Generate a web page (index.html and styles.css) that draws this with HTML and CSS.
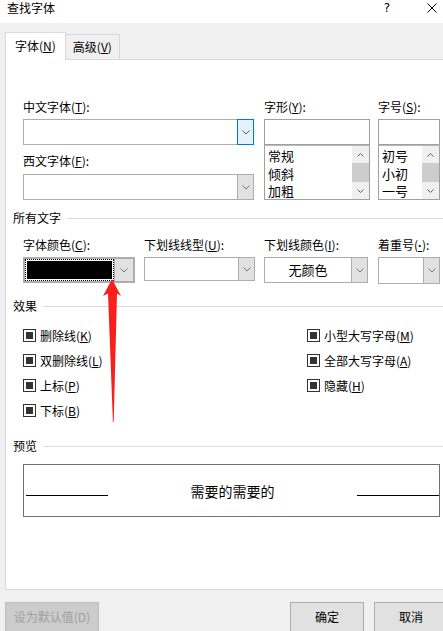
FILE: index.html
```html
<!DOCTYPE html>
<html lang="zh-CN">
<head>
    <meta charset="UTF-8">
    <title>查找字体</title>
    <link rel="stylesheet" href="styles.css">
</head>
<body>
    <div class="titlebar">
        <span class="title">查找字体</span>
        <span class="help">?</span>
        <svg class="close" width="10" height="10" viewBox="0 0 10 10">
            <path d="M0.5 0.5 L9.5 9.5 M9.5 0.5 L0.5 9.5" stroke="#000" stroke-width="1" fill="none"/>
        </svg>
    </div>

    <div class="tabs">
        <div class="tab active">字体(<u>N</u>)</div>
        <div class="tab">高级(<u>V</u>)</div>
    </div>

    <div class="panel">
        <!-- 字体 -->
        <div class="fonts">
            <div class="col col-face">
                <div class="field-label">中文字体(<u>T</u>):</div>
                <div class="combo">
                    <span class="value"></span>
                    <span class="drop focus"><svg width="8" height="5" viewBox="0 0 8 5"><polyline points="0.5,0.5 4,4 7.5,0.5" fill="none" stroke="#555"/></svg></span>
                </div>
                <div class="field-label second">西文字体(<u>F</u>):</div>
                <div class="combo">
                    <span class="value"></span>
                    <span class="drop"><svg width="8" height="5" viewBox="0 0 8 5"><polyline points="0.5,0.5 4,4 7.5,0.5" fill="none" stroke="#777"/></svg></span>
                </div>
            </div>
            <div class="col col-style">
                <div class="field-label">字形(<u>Y</u>):</div>
                <div class="textbox"></div>
                <div class="listbox">
                    <ul class="items">
                        <li>常规</li>
                        <li>倾斜</li>
                        <li>加粗</li>
                    </ul>
                    <div class="scrollbar">
                        <span class="sb-btn"><svg width="7" height="4" viewBox="0 0 7 4"><polyline points="0.5,3.5 3.5,0.5 6.5,3.5" fill="none" stroke="#606060"/></svg></span>
                        <span class="sb-thumb"></span>
                        <span class="sb-btn"><svg width="7" height="4" viewBox="0 0 7 4"><polyline points="0.5,0.5 3.5,3.5 6.5,0.5" fill="none" stroke="#606060"/></svg></span>
                    </div>
                </div>
            </div>
            <div class="col col-size">
                <div class="field-label">字号(<u>S</u>):</div>
                <div class="textbox"></div>
                <div class="listbox">
                    <ul class="items">
                        <li>初号</li>
                        <li>小初</li>
                        <li>一号</li>
                    </ul>
                    <div class="scrollbar">
                        <span class="sb-btn"><svg width="7" height="4" viewBox="0 0 7 4"><polyline points="0.5,3.5 3.5,0.5 6.5,3.5" fill="none" stroke="#606060"/></svg></span>
                        <span class="sb-thumb"></span>
                        <span class="sb-btn"><svg width="7" height="4" viewBox="0 0 7 4"><polyline points="0.5,0.5 3.5,3.5 6.5,0.5" fill="none" stroke="#606060"/></svg></span>
                    </div>
                </div>
            </div>
        </div>

        <!-- 所有文字 -->
        <div class="group">所有文字</div>
        <div class="attrs">
            <div class="attr attr-color">
                <div class="field-label">字体颜色(<u>C</u>):</div>
                <div class="combo color">
                    <span class="swatch"><span class="swatch-fill"></span></span>
                    <span class="drop plain"><svg width="8" height="5" viewBox="0 0 8 5"><polyline points="0.5,0.5 4,4 7.5,0.5" fill="none" stroke="#777"/></svg></span>
                </div>
            </div>
            <div class="attr attr-ustyle">
                <div class="field-label">下划线线型(<u>U</u>):</div>
                <div class="combo short">
                    <span class="value"></span>
                    <span class="drop"><svg width="8" height="5" viewBox="0 0 8 5"><polyline points="0.5,0.5 4,4 7.5,0.5" fill="none" stroke="#777"/></svg></span>
                </div>
            </div>
            <div class="attr attr-ucolor">
                <div class="field-label">下划线颜色(<u>I</u>):</div>
                <div class="combo">
                    <span class="value center">无颜色</span>
                    <span class="drop"><svg width="8" height="5" viewBox="0 0 8 5"><polyline points="0.5,0.5 4,4 7.5,0.5" fill="none" stroke="#777"/></svg></span>
                </div>
            </div>
            <div class="attr attr-emph">
                <div class="field-label">着重号(<u class="latin">·</u>):</div>
                <div class="combo tall">
                    <span class="value"></span>
                    <span class="drop"><svg width="8" height="5" viewBox="0 0 8 5"><polyline points="0.5,0.5 4,4 7.5,0.5" fill="none" stroke="#777"/></svg></span>
                </div>
            </div>
        </div>

        <!-- 效果 -->
        <div class="group">效果</div>
        <div class="effects">
            <div class="effects-col left">
                <label class="check"><span class="box"></span><span>删除线(<u>K</u>)</span></label>
                <label class="check"><span class="box"></span><span>双删除线(<u>L</u>)</span></label>
                <label class="check"><span class="box"></span><span>上标(<u>P</u>)</span></label>
                <label class="check"><span class="box"></span><span>下标(<u>B</u>)</span></label>
            </div>
            <div class="effects-col">
                <label class="check"><span class="box"></span><span>小型大写字母(<u>M</u>)</span></label>
                <label class="check"><span class="box"></span><span>全部大写字母(<u>A</u>)</span></label>
                <label class="check"><span class="box"></span><span>隐藏(<u>H</u>)</span></label>
            </div>
        </div>

        <!-- 预览 -->
        <div class="group">预览</div>
        <div class="preview">
            <span class="rule"></span>
            <span class="sample">需要的需要的</span>
            <span class="rule"></span>
        </div>
    </div>

    <div class="buttons">
        <button class="btn default" disabled>设为默认值(D)</button>
        <button class="btn ok">确定</button>
        <button class="btn">取消</button>
    </div>

    <svg class="arrow" width="24" height="150" viewBox="0 0 24 150">
        <polygon points="12,3 21,20 17,17.5 13.7,146 12.9,146 8,17.5 3,20" fill="#f8201c"/>
    </svg>
</body>
</html>
```

FILE: styles.css
```css
html,
body {
    margin: 0;
    padding: 0;
    overflow: hidden;
}

body {
    position: relative;
    width: 443px;
    height: 631px;
    background: #f0f0f0;
    font-family: "Noto Sans CJK SC", "Microsoft YaHei", sans-serif;
    font-size: 12px;
    line-height: 16px;
    color: #000;
    text-autospace: no-autospace;
}

u {
    text-decoration: underline;
    text-underline-offset: 1px;
}

.latin {
    font-family: "Liberation Sans", sans-serif;
    font-weight: bold;
}

/* title bar */
.titlebar {
    display: flex;
    align-items: flex-start;
    height: 23px;
    padding-left: 7px;
    background: #fff;
}

.titlebar .help {
    margin-left: auto;
    margin-right: 34px;
    width: 12px;
    text-align: center;
    font-family: "DejaVu Sans", sans-serif;
    font-size: 12px;
}

.titlebar .close {
    margin: 3px 6px 0 0;
}

/* tabs */
.tabs {
    display: flex;
    align-items: flex-end;
    height: 36px;
    padding-left: 5px;
}

.tab {
    box-sizing: border-box;
    height: 25px;
    padding: 0 7px;
    margin-left: -1px;
    border: 1px solid #d9d9d9;
    border-bottom: none;
    line-height: 24px;
    background: #f0f0f0;
}

.tab.active {
    position: relative;
    z-index: 1;
    height: 28px;
    margin-left: 0;
    margin-bottom: -1px;
    padding: 0 9px;
    line-height: 26px;
    background: #fff;
}

/* panel */
.panel {
    box-sizing: border-box;
    height: 531px;
    margin: 0 -10px 0 5px;
    padding: 39px 0 0 7px;
    background: #fff;
    border: 1px solid #d9d9d9;
}

.field-label {
    height: 16px;
    margin-bottom: 4px;
    white-space: nowrap;
}

.field-label.second {
    margin-top: 8px;
    margin-bottom: 5px;
}

.fonts {
    display: flex;
    padding-left: 10px;
}

.col {
    display: flex;
    flex-direction: column;
}

.col-face {
    width: 231px;
    margin-right: 10px;
}

.col-style {
    width: 106px;
    margin-right: 8px;
}

.col-size {
    width: 62px;
}

/* combo boxes */
.combo {
    display: flex;
    box-sizing: border-box;
    height: 26px;
    border: 1px solid #adadad;
    background: #fff;
}

.combo.short {
    height: 24px;
}

.combo.tall {
    height: 27px;
}

.combo .value {
    flex: 1;
    display: flex;
    align-items: center;
    padding-left: 4px;
}

.combo .value.center {
    justify-content: center;
    padding-left: 0;
    font-size: 13px;
}

.combo .drop {
    display: flex;
    align-items: center;
    justify-content: center;
    box-sizing: border-box;
    width: 17px;
    margin: -1px -1px -1px 0;
    border: 1px solid #adadad;
    background: #e1e1e1;
}

.combo .drop.focus {
    border-color: #0078d7;
    background: #e5f1fb;
}

.combo.color {
    border: 2px solid #adadad;
}

.combo .drop.plain {
    width: 19px;
    margin: 0;
    border: none;
    border-left: 1px solid #adadad;
}

.swatch {
    flex: 1;
    border: 1px dotted #000;
    padding: 1px;
}

.swatch-fill {
    display: block;
    height: 100%;
    background: #000;
}

.textbox {
    box-sizing: border-box;
    height: 26px;
    border: 1px solid #a0a0a0;
    background: #fff;
}

/* list boxes */
.listbox {
    display: flex;
    box-sizing: border-box;
    height: 55px;
    border: 1px solid #a0a0a0;
    border-top-color: #b8b8b8;
}

.items {
    flex: 1;
    margin: 0;
    padding: 1px 0 0 3px;
    list-style: none;
    line-height: 17.5px;
    font-size: 13px;
    overflow: hidden;
}

.scrollbar {
    display: flex;
    flex-direction: column;
    width: 17px;
    background: #f0f0f0;
}

.sb-btn {
    display: flex;
    align-items: center;
    justify-content: center;
    height: 17px;
}

.sb-thumb {
    flex: 1;
    background: #cdcdcd;
}

/* group headers */
.group {
    display: flex;
    align-items: center;
    gap: 6px;
    height: 16px;
    margin-top: 10px;
    white-space: nowrap;
}

.group::after {
    content: "";
    flex: 1;
    height: 1px;
    background: #dcdcdc;
}

.attrs {
    display: flex;
    align-items: flex-start;
    padding-left: 10px;
    margin-top: 11px;
}

.attr {
    display: flex;
    flex-direction: column;
}

.attr-color {
    width: 112px;
    margin-right: 9px;
}

.attr-ustyle {
    width: 111px;
    margin-right: 9px;
}

.attr-ucolor {
    width: 104px;
    margin-right: 10px;
}

.attr-emph {
    width: 62px;
}

.attrs + .group {
    margin-top: 14px;
}

/* effects */
.effects {
    display: flex;
    padding-left: 10px;
    margin-top: 9px;
}

.effects-col {
    display: flex;
    flex-direction: column;
}

.effects-col.left {
    width: 284px;
}

.check {
    display: flex;
    align-items: center;
    gap: 4px;
    height: 25px;
    white-space: nowrap;
}

.box {
    display: flex;
    align-items: center;
    justify-content: center;
    box-sizing: border-box;
    width: 13px;
    height: 13px;
    border: 1px solid #333;
    background: #fff;
}

.box::after {
    content: "";
    width: 7px;
    height: 7px;
    background: #333;
}

.effects + .group {
    margin-top: 15px;
}

/* preview */
.preview {
    display: flex;
    align-items: center;
    justify-content: space-between;
    box-sizing: border-box;
    width: 417px;
    height: 53px;
    margin: 10px 0 0 10px;
    padding-left: 2px;
    border: 1px solid #707070;
}

.preview .rule {
    width: 82px;
    height: 1px;
    margin-top: 10px;
    background: #000;
}

.preview .sample {
    font-size: 14px;
    line-height: 18px;
}

/* dialog buttons */
.buttons {
    display: flex;
    margin: 12px -5px 0 5px;
}

.btn {
    box-sizing: border-box;
    width: 74px;
    height: 30px;
    padding: 0;
    border: 1px solid #adadad;
    background: #e1e1e1;
    font-family: inherit;
    font-size: 12px;
    line-height: 28px;
    color: #000;
}

.btn.default {
    width: 94px;
    border-color: #bfbfbf;
    background: #cccccc;
    color: #a0a0a0;
}

.btn.ok {
    margin-left: auto;
    margin-right: 10px;
}

/* annotation arrow */
.arrow {
    position: absolute;
    left: 100px;
    top: 276px;
    pointer-events: none;
}
```
